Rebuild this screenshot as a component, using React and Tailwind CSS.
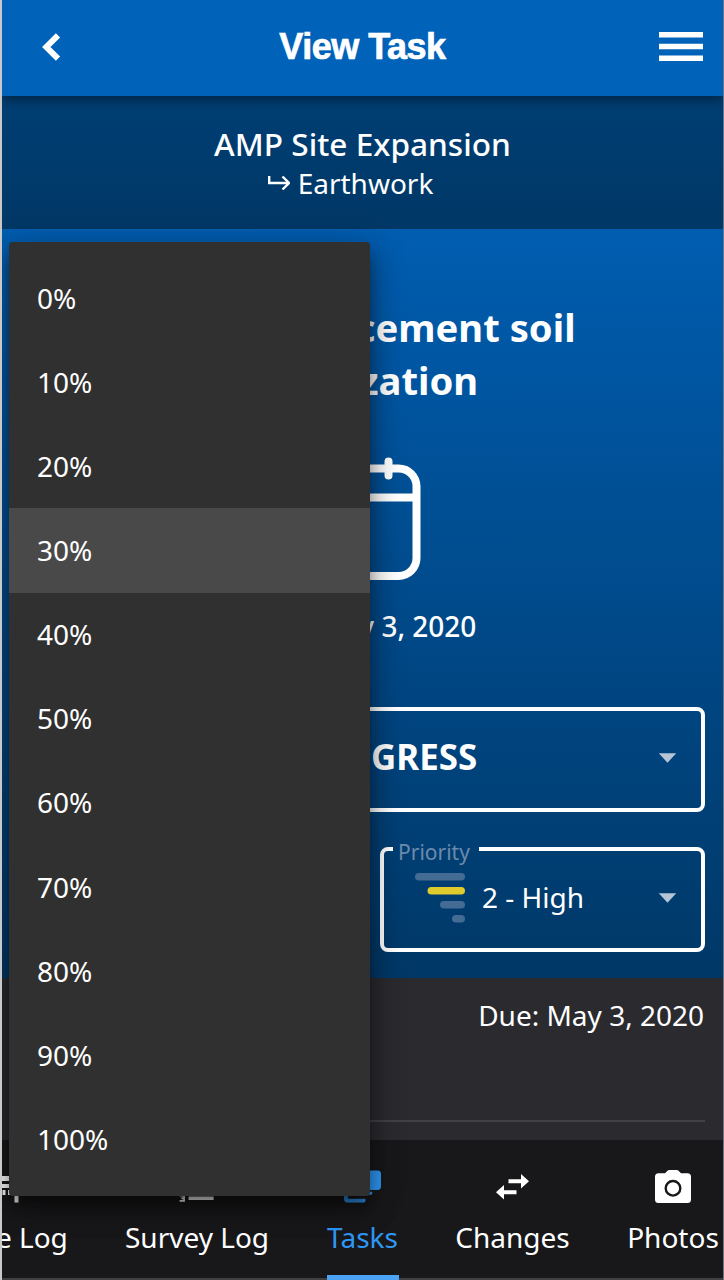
const PERCENTS = ['0%', '10%', '20%', '30%', '40%', '50%', '60%', '70%', '80%', '90%', '100%']

function Caret() {
  return (
    <svg width="19" height="10" viewBox="0 0 20 10" className="text-[#b5c5d5]">
      <path d="M0.8 0h18.4L10 10z" fill="currentColor" />
    </svg>
  )
}

function PriorityIcon() {
  return (
    <svg width="50" height="50" viewBox="0 0 50 50">
      <rect x="0" y="0" width="50" height="7.6" rx="3.8" fill="#446b94" />
      <rect x="12.5" y="14" width="37.5" height="7.6" rx="3.8" fill="#dfcb2c" />
      <rect x="25" y="28" width="25" height="7.6" rx="3.8" fill="#446b94" />
      <rect x="37" y="42" width="13" height="7.6" rx="3.8" fill="#446b94" />
    </svg>
  )
}

function SiteLogIcon() {
  return (
    <svg width="36" height="36" viewBox="3 0 36 36" fill="currentColor">
      <path d="M3 7h27v5H3zM3 15h27v4H3zM7.500 21h3v5h-3zM13 21h3v5h-3zM19.500 21h4v12.500h-4z" />
    </svg>
  )
}

function SurveyIcon() {
  return (
    <svg width="43" height="43" viewBox="0 0 24 24" fill="currentColor" className="mt-px">
      <path d="M2 17h2v.5H3v1h1v.5H2v1h3v-4H2v1zm1-9h1V4H2v1h1v3zm-1 3h1.800L2 13.100v.9h3v-1H3.200L5 10.900V10H2v1zm5-6v2h14V5H7zm0 14h14v-2H7v2zm0-6h14v-2H7v2z" />
    </svg>
  )
}

function TasksIcon() {
  return (
    <svg width="37" height="34" viewBox="0 0 38 34" fill="currentColor">
      <rect x="8" y="0" width="30" height="20" rx="3.500" />
      <path d="M4 7v16a2 2 0 0 0 2 2h21.500a1.500 1.500 0 0 0 1.500-1.500V22H7V7z" />
      <path d="M0 14v15a4 4 0 0 0 4 4h16.500a1.500 1.500 0 0 0 1.500-1.500V29H4V14z" />
    </svg>
  )
}

function ChangesIcon() {
  return (
    <svg width="33" height="26" viewBox="0 0 33 26" fill="currentColor">
      <path d="M12.500 5.300H25V0l8 7.300-8 7.200V9.300H12.500zM20.500 16.200H8V11L0 18.300l8 7.200v-5.300h12.500z" />
    </svg>
  )
}

function PhotosIcon() {
  return (
    <svg width="36" height="33" viewBox="0 0 36 33" className="-mt-[2px]">
      <path
        d="M14.500 0h7c1 0 1.700.3 2.300 1L26 3.300h6.500A3.500 3.500 0 0 1 36 6.800v22.700a3.500 3.500 0 0 1-3.500 3.500h-29A3.500 3.500 0 0 1 0 29.500V6.800a3.500 3.500 0 0 1 3.500-3.500H10L12.200 1c.6-.7 1.300-1 2.300-1z"
        fill="currentColor"
      />
      <circle cx="18" cy="18.300" r="7.300" fill="none" stroke="#18181a" strokeWidth="2.400" />
    </svg>
  )
}

const TABS = [
  { label: 'Site Log', icon: SiteLogIcon, width: 'w-[161px]' },
  { label: 'Survey Log', icon: SurveyIcon, width: 'w-[202px]' },
  { label: 'Tasks', icon: TasksIcon, width: 'w-[129px]', active: true },
  { label: 'Changes', icon: ChangesIcon, width: 'w-[171px]' },
  { label: 'Photos', icon: PhotosIcon, width: 'w-[150px]' },
]

function PercentMenu() {
  return (
    <ul className="absolute left-[7px] top-[242px] z-30 w-[361px] rounded-[4px] bg-[#303030] py-[14px] shadow-[0_10px_12px_-4px_rgba(0,0,0,0.35),0_14px_26px_2px_rgba(0,0,0,0.3),0_5px_36px_2px_rgba(0,0,0,0.18)]">
      {PERCENTS.map((p) => (
        <li
          key={p}
          className={`flex h-[84.150px] items-center pb-px pl-7 text-[28px] ${p === '30%' ? 'bg-[#494949]' : ''}`}
        >
          {p}
        </li>
      ))}
    </ul>
  )
}

export default function App() {
  return (
    <div className="relative flex h-[1280px] w-[724px] flex-col overflow-hidden border-l-2 border-r border-l-[#c9c9c9] border-r-[#6b7684] bg-[#2b2a2f] font-['Noto_Sans',sans-serif] text-white">
      <header className="z-10 flex h-24 shrink-0 items-center justify-between bg-[#0063b9] pb-[3px] pl-[30px] pr-5 shadow-[0_4px_10px_rgba(0,0,0,0.4)]">
        <svg width="34" height="28" viewBox="0 0 34 28" fill="none" stroke="white" strokeWidth="6">
          <path d="M26 2.300L14.300 14l11.700 11.700" />
        </svg>
        <h1 className="font-['Liberation_Sans',sans-serif] text-[36px] font-bold leading-none tracking-[-0.500px] [-webkit-text-stroke:0.700px_white]">
          View Task
        </h1>
        <svg width="44" height="29" viewBox="0 0 44 29" fill="white">
          <path d="M0 0h44v5.500H0zM0 11.800h44v5.500H0zM0 23.500h44V29H0z" />
        </svg>
      </header>

      <section className="flex h-[133px] shrink-0 flex-col items-center bg-gradient-to-b from-[#003e73] to-[#003867] pt-[28px]">
        <h2 className="text-[31.600px] font-medium leading-[40px]">AMP Site Expansion</h2>
        <div className="-mt-px flex items-center gap-2 pr-6 text-[28px] leading-[40px]">
          <svg width="22" height="16" viewBox="0 0 22 16" fill="none" stroke="white" strokeWidth="2.400">
            <path d="M1.200 1v7H20M14.500 1.500L21 8l-6.500 6.500" />
          </svg>
          Earthwork
        </div>
      </section>

      <main className="flex h-[749px] shrink-0 flex-col bg-gradient-to-b from-[#005db0] to-[#003867] px-[18px]">
        <h2 className="flex flex-col items-center pt-[72px] text-[38.200px] font-bold leading-[52.500px]">
          <span className="pl-[32px]">Portland cement soil</span>
          <span className="pr-[4px]">stabilization</span>
        </h2>
        <div className="flex flex-col items-center pt-[51px]">
          <svg width="120" height="124" viewBox="0 0 120 124" fill="none" stroke="white" strokeWidth="8">
            <rect x="6" y="11.500" width="107.500" height="107.500" rx="18" />
            <path d="M6 40.500h107" />
            <path d="M33.500 4.500v14M85.500 4.500v14" strokeLinecap="round" />
          </svg>
          <p className="pt-[25px] text-[28px] font-medium leading-[40px]">Due: May 3, 2020</p>
        </div>
        <div className="relative mt-[61px] flex h-[105px] shrink-0 items-center justify-center rounded-lg border-[4px] border-white pb-[4px]">
          <span className="text-[34.900px] font-bold">IN PROGRESS</span>
          <span className="absolute right-[24px] top-[42px] flex">
            <Caret />
          </span>
        </div>
        <div className="mt-[35px] flex justify-between">
          <div className="h-[105px] w-[325px] rounded-lg border-[4px] border-white" />
          <div className="relative h-[105px] w-[325px]">
            <fieldset className="absolute inset-0 rounded-lg border-4 border-white pl-[9px]">
              <legend className="h-1 w-[86px]" />
            </fieldset>
            <span className="absolute left-[18px] top-[-9px] text-[21px] leading-[28px] text-[#6c8bad]">Priority</span>
            <div className="flex h-full items-center pb-[4px] pl-[35px] pr-[28px]">
              <PriorityIcon />
              <span className="-mt-px pl-[17px] text-[28px]">2 - High</span>
              <span className="ml-auto">
                <Caret />
              </span>
            </div>
          </div>
        </div>
      </main>

      <section className="h-[162px] shrink-0 px-[18px]">
        <div className="flex h-[144px] justify-end border-b-2 border-[#424146] pr-px pt-[17px] text-[28px] leading-[40px]">
          Due: May 3, 2020
        </div>
      </section>

      <nav className="flex h-[140px] shrink-0 border-b-2 border-[#403f43] bg-[#18181a]">
        <div className="-ml-[67px] flex">
          {TABS.map(({ label, icon: Icon, width, active }) => (
            <div key={label} className={`relative flex h-[140px] shrink-0 flex-col items-center ${width} ${active ? 'text-[#2f97f5]' : ''}`}>
              <div className="flex h-[94px] items-center justify-center">
                <Icon />
              </div>
              <span className="-mt-[17px] whitespace-nowrap text-[28px] leading-[40px]">{label}</span>
              {active && <span className="absolute bottom-0 h-[5px] w-[72px] bg-[#4ba3f5]" />}
            </div>
          ))}
        </div>
      </nav>

      <PercentMenu />
    </div>
  )
}
